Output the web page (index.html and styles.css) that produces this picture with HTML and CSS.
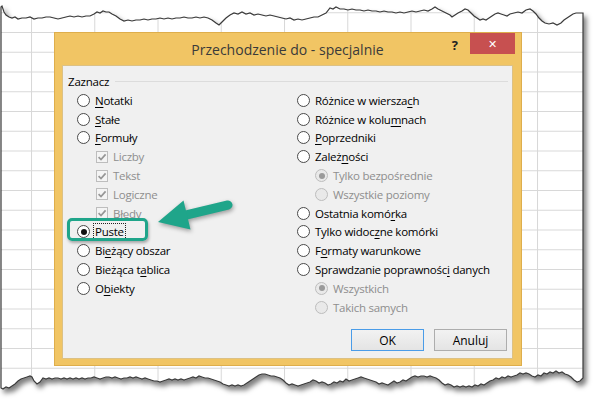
FILE: index.html
```html
<!DOCTYPE html>
<html lang="pl">
<head>
    <meta charset="UTF-8">
    <title>Przechodzenie do - specjalnie</title>
    <link rel="stylesheet" href="styles.css">
</head>
<body>
    <div class="sheet">
        <!-- torn worksheet behind the dialog -->
        <svg class="paper" width="600" height="415" viewBox="0 0 600 415">
            <defs>
                <pattern id="cells" x="31" y="32" width="63.25" height="19.75" patternUnits="userSpaceOnUse">
                    <rect width="63.25" height="19.75" fill="#fff"/>
                    <path d="M0.5 0V19.75M0 0.5H63.25" stroke="#d8d8d8" stroke-width="1"/>
                </pattern>
                <filter id="torn-shadow" x="-5%" y="-5%" width="115%" height="115%">
                    <feDropShadow dx="3" dy="4" stdDeviation="2.5" flood-color="#000" flood-opacity="0.5"/>
                </filter>
            </defs>
            <path fill="url(#cells)" stroke="#3a3a3a" stroke-width="1.2" filter="url(#torn-shadow)"
                d="M1 7L2 6L4 12L6 15L9 17L12 18L15 17L18 19L22 18L26 18L30 17L34 19L38 18L42 18L46 17L50 17L54 18L58 19L62 18L66 17L70 16L74 17L78 16L82 17L86 16L90 16L94 14L97 12L100 13L103 11L106 12L109 12L112 14L116 16L120 19L124 21L128 20L132 21L136 20L140 20L144 19L148 20L152 19L156 19L160 18L164 19L168 18L172 19L176 18L180 18L184 17L188 18L192 18L196 17L200 18L204 17L208 18L212 20L216 23L219 25L222 22L226 18L230 15L234 13L238 14L242 12L246 14L250 13L254 15L258 14L262 15L266 16L270 15L274 16L278 17L282 18L286 19L290 18L294 20L298 19L302 20L306 19L310 18L314 17L318 17L322 15L326 13L330 8L333 9L336 7L340 9L344 9L348 10L352 9L356 10L360 10L364 11L368 10L372 11L376 11L380 12L384 11L388 12L392 12L396 13L400 12L404 13L408 12L412 11L416 12L420 11L424 10L428 11L432 9L435 7L438 9L442 11L446 13L450 15L452 17L455 15L458 13L462 11L465 9L468 10L471 13L474 16L477 18L480 20L483 19L486 20L489 18L492 16L495 14L498 13L501 14L504 15L507 16L510 14L514 13L518 12L522 13L526 10L530 9L533 11L536 14L539 18L542 21L545 23L549 24L553 23L557 25L561 23L564 20L567 18L570 16L573 14L576 13L580 13L583 13
                   L583 378L580 381L577 382L574 380L571 377L568 375L565 374L562 372L559 373L556 371L553 373L550 372L547 374L544 373L541 376L538 375L535 377L532 376L529 374L526 373L523 374L520 373L517 375L514 376L511 377L508 376L505 378L502 377L499 379L496 378L493 380L490 381L487 383L484 385L481 384L478 386L475 385L472 387L469 386L466 387L463 386L460 387L457 386L454 387L451 385L448 384L445 385L442 383L439 380L436 378L433 377L430 376L427 377L424 376L421 376L418 377L415 376L412 377L409 379L406 381L403 380L400 382L397 383L394 381L391 383L388 385L385 384L382 383L379 384L376 382L373 381L370 380L367 379L364 378L361 377L358 378L355 379L352 380L349 381L346 379L343 382L340 381L337 383L334 382L331 384L328 385L325 383L322 382L319 383L316 381L313 380L310 382L307 383L304 384L301 385L298 386L295 385L292 384L289 385L286 383L283 380L280 378L277 377L274 376L271 376L268 375L265 374L262 374L259 375L256 377L253 379L250 381L247 383L244 385L241 386L238 385L235 386L232 385L229 386L226 385L223 384L220 382L217 381L214 380L211 379L208 378L205 378L202 377L199 376L196 378L193 377L190 378L187 379L184 380L181 379L178 380L175 379L172 380L169 379L166 380L163 381L160 382L157 381L154 381L151 380L148 379L145 378L142 379L139 378L136 377L133 378L130 377L127 378L124 378L121 379L118 378L115 377L112 378L109 377L106 377L103 378L100 379L97 378L94 377L91 378L88 378L85 379L82 378L79 379L76 378L73 379L70 378L67 379L64 378L61 379L58 378L55 378L52 379L49 378L46 379L43 378L40 382L37 384L34 381L32 377L30 376L27 377L24 378L21 379L18 381L15 384L12 386L9 388L6 387L3 389L1 388Z"/>
        </svg>

        <div class="dialog">
            <div class="titlebar">
                <span class="title">Przechodzenie do - specjalnie</span>
                <div class="controls">
                    <span class="help">?</span>
                    <span class="close">&#x2715;</span>
                </div>
            </div>

            <div class="panel">
                <div class="group-head">
                    <span>Zaznacz</span>
                    <span class="rule"></span>
                </div>

                <div class="options">
                    <div class="col">
                        <div class="opt"><span class="radio"></span><span><u>N</u>otatki</span></div>
                        <div class="opt"><span class="radio"></span><span><u>S</u>tałe</span></div>
                        <div class="opt"><span class="radio"></span><span><u>F</u>ormuły</span></div>
                        <div class="opt sub off"><span class="check"><svg viewBox="0 0 10 10"><path d="M1.6 5.2L4 7.6L8.6 2.4"/></svg></span><span>Liczby</span></div>
                        <div class="opt sub off"><span class="check"><svg viewBox="0 0 10 10"><path d="M1.6 5.2L4 7.6L8.6 2.4"/></svg></span><span>Tekst</span></div>
                        <div class="opt sub off"><span class="check"><svg viewBox="0 0 10 10"><path d="M1.6 5.2L4 7.6L8.6 2.4"/></svg></span><span>Logiczne</span></div>
                        <div class="opt sub off"><span class="check"><svg viewBox="0 0 10 10"><path d="M1.6 5.2L4 7.6L8.6 2.4"/></svg></span><span>Błędy</span></div>
                        <div class="opt"><span class="radio on"></span><span class="focus">P<u>u</u>ste</span></div>
                        <div class="opt"><span class="radio"></span><span>Bi<u>e</u>żący obszar</span></div>
                        <div class="opt"><span class="radio"></span><span>Bieżąca t<u>a</u>blica</span></div>
                        <div class="opt"><span class="radio"></span><span>O<u>b</u>iekty</span></div>
                    </div>
                    <div class="col">
                        <div class="opt"><span class="radio"></span><span>Różnice w wiersza<u>c</u>h</span></div>
                        <div class="opt"><span class="radio"></span><span>Różnice w kolu<u>m</u>nach</span></div>
                        <div class="opt"><span class="radio"></span><span><u>P</u>oprzedniki</span></div>
                        <div class="opt"><span class="radio"></span><span>Zależ<u>n</u>ości</span></div>
                        <div class="opt sub off"><span class="radio on"></span><span>Tylko bezpośrednie</span></div>
                        <div class="opt sub off"><span class="radio"></span><span>Wszystkie poziomy</span></div>
                        <div class="opt"><span class="radio"></span><span>Ostatnia komó<u>r</u>ka</span></div>
                        <div class="opt"><span class="radio"></span><span>Tylko widoc<u>z</u>ne komórki</span></div>
                        <div class="opt"><span class="radio"></span><span>F<u>o</u>rmaty warunkowe</span></div>
                        <div class="opt"><span class="radio"></span><span>Sprawdzanie poprawnośc<u>i</u> danych</span></div>
                        <div class="opt sub off"><span class="radio on"></span><span>Wszystkich</span></div>
                        <div class="opt sub off"><span class="radio"></span><span>Takich samych</span></div>
                    </div>
                </div>

                <div class="buttons">
                    <button class="btn btn-default">OK</button>
                    <button class="btn">Anuluj</button>
                </div>
            </div>
        </div>

        <!-- annotation on top of the screenshot -->
        <div class="callout"></div>
        <svg class="arrow" width="90" height="45" viewBox="0 0 90 45">
            <line x1="78" y1="10" x2="32" y2="21" stroke="#1fa58a" stroke-width="9" stroke-linecap="round"/>
            <polygon points="8,27 33.5,5.5 40.5,34.5" fill="#1fa58a"/>
        </svg>
    </div>
</body>
</html>
```

FILE: styles.css
```css
* {
    margin: 0;
    padding: 0;
    box-sizing: border-box;
}

body {
    background: #fff;
    font-family: "Open Sans", "Noto Sans", sans-serif;
    color: #000;
}

.sheet {
    position: relative;
    width: 600px;
    height: 415px;
    padding: 32px 0 0 54px;
    overflow: hidden;
}

.paper {
    position: absolute;
    left: 0;
    top: 0;
}

/* dialog window */
.dialog {
    position: relative;
    width: 468px;
    height: 334px;
    border: 1px solid #deae4c;
    background: #f1c564;
    padding: 0 8px 6px 7px;
    display: flex;
    flex-direction: column;
}

.titlebar {
    height: 32px;
    display: grid;
    grid-template-columns: 1fr auto 1fr;
    align-items: start;
}

.title {
    grid-column: 2;
    font-size: 14px;
    line-height: 33px;
    color: #3a3a3a;
    white-space: nowrap;
}

.controls {
    grid-column: 3;
    justify-self: end;
    display: flex;
    align-items: flex-start;
    margin-right: -2px;
}

.help {
    font-size: 13px;
    font-weight: 700;
    line-height: 24px;
    color: #222;
    margin-right: 12px;
}

.close {
    width: 45px;
    height: 21px;
    background: #c75050;
    color: #fff;
    font-size: 11px;
    display: flex;
    align-items: center;
    justify-content: center;
}

.panel {
    flex: 1;
    background: #f0f0f0;
    border: 1px solid #dcc185;
    display: flex;
    flex-direction: column;
}

.group-head {
    display: flex;
    align-items: center;
    gap: 6px;
    height: 16px;
    margin: 7px 4px 0 5px;
    font-size: 11.5px;
    letter-spacing: -0.2px;
}

.group-head .rule {
    flex: 1;
    height: 1px;
    background: #dcdcdc;
}

.options {
    display: grid;
    grid-template-columns: 220px 1fr;
    margin-top: 2px;
    padding-left: 14px;
}

.opt {
    display: flex;
    align-items: center;
    gap: 5px;
    height: 18.8px;
    font-size: 11.5px;
    letter-spacing: -0.25px;
    white-space: nowrap;
}

.opt u {
    text-underline-offset: 2px;
}

.opt.sub {
    padding-left: 18px;
}

.opt.off {
    color: #8e8e8e;
}

.radio {
    flex: none;
    width: 13px;
    height: 13px;
    border: 1px solid #4a4a4a;
    border-radius: 50%;
    background: #fff;
    display: flex;
    align-items: center;
    justify-content: center;
}

.radio.on::after {
    content: '';
    width: 6px;
    height: 6px;
    border-radius: 50%;
    background: #111;
}

.off .radio {
    border-color: #bdbdbd;
    background: #e9e9e9;
}

.off .radio.on::after {
    background: #9a9a9a;
}

.check {
    flex: none;
    width: 12px;
    height: 12px;
    margin-left: 1px;
    border: 1px solid #bdbdbd;
    background: #f4f4f4;
    display: flex;
}

.check svg {
    width: 10px;
    height: 10px;
    fill: none;
    stroke: #969696;
    stroke-width: 1.7;
}

.focus {
    outline: 1px dotted #222;
    padding: 0 1px;
    margin-left: -1px;
}

.buttons {
    margin-top: auto;
    display: flex;
    justify-content: flex-end;
    gap: 10px;
    padding: 0 5px 7px 0;
}

.btn {
    width: 73px;
    height: 22px;
    font-family: inherit;
    font-size: 12px;
    color: #000;
    border: 1px solid #adadad;
    background: linear-gradient(#f2f2f2, #e4e4e4);
}

.btn-default {
    border-color: #4a9ce8;
}

/* green annotation */
.callout {
    position: absolute;
    left: 67px;
    top: 218px;
    width: 81px;
    height: 23px;
    border: 3px solid #1fa58a;
    border-radius: 5px;
    box-shadow: 1px 2px 3px rgba(0, 0, 0, 0.3);
}

.arrow {
    position: absolute;
    left: 150px;
    top: 195px;
    filter: drop-shadow(1px 2px 2px rgba(0, 0, 0, 0.35));
}
```
